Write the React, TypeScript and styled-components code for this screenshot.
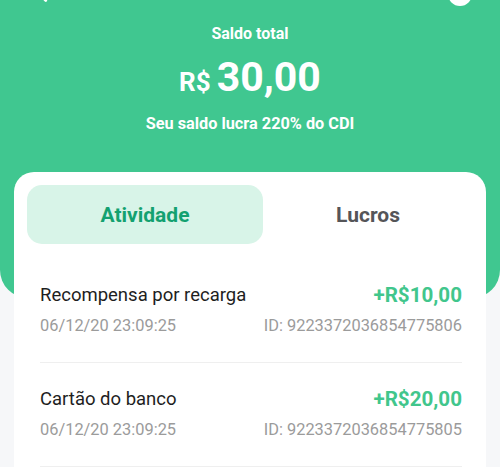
import * as React from 'react';
import styled, { createGlobalStyle } from 'styled-components';

const GlobalStyle = createGlobalStyle`
  body {
    margin: 0;
    background: #f6f7f9;
    font-family: Roboto, "Liberation Sans", sans-serif;
  }
`;

const activities = [
  { title: 'Recompensa por recarga', date: '06/12/20 23:09:25', amount: '+R$10,00', id: '9223372036854775806' },
  { title: 'Cartão do banco', date: '06/12/20 23:09:25', amount: '+R$20,00', id: '9223372036854775805' },
];

export default function App() {
  return (
    <Page>
      <GlobalStyle />
      <Header>
        <TopBar>
          <svg width="22" height="22" viewBox="0 0 24 24" fill="none" stroke="#fff" strokeWidth="3" strokeLinecap="round" strokeLinejoin="round">
            <path d="M15 5 L8 12 L15 19" />
          </svg>
          <HelpDot />
        </TopBar>
        <Label>Saldo total</Label>
        <Balance>
          <Currency>R$</Currency>
          <Value>30,00</Value>
        </Balance>
        <Note>Seu saldo lucra 220% do CDI</Note>
      </Header>
      <Card>
        <Tabs>
          <Tab active>Atividade</Tab>
          <Tab>Lucros</Tab>
        </Tabs>
        <List>
          {activities.map((a) => (
            <Row key={a.id}>
              <Line>
                <Title>{a.title}</Title>
                <Amount>{a.amount}</Amount>
              </Line>
              <Line>
                <Meta>{a.date}</Meta>
                <Meta>ID: {a.id}</Meta>
              </Line>
            </Row>
          ))}
        </List>
      </Card>
    </Page>
  );
}

const Page = styled.div`
  height: 467px;
  background: #f6f7f9;
  overflow: hidden;
`;

const Header = styled.div`
  background: #40c790;
  height: 298px;
  border-radius: 0 0 28px 28px;
  display: flex;
  flex-direction: column;
  align-items: center;
  color: #fff;
`;

const TopBar = styled.div`
  align-self: stretch;
  display: flex;
  justify-content: space-between;
  align-items: center;
  height: 24px;
  margin-top: -18px;
  padding: 0 28px 0 32px;
`;

const HelpDot = styled.div`
  width: 24px;
  height: 24px;
  border-radius: 50%;
  background: #fff;
`;

const Label = styled.div`
  margin-top: 18px;
  font-size: 16px;
  font-weight: 700;
  line-height: 20px;
`;

const Balance = styled.div`
  display: flex;
  align-items: baseline;
  gap: 6px;
  margin-top: 7px;
  line-height: 52px;
`;

const Currency = styled.span`
  font-size: 26px;
  font-weight: 700;
`;

const Value = styled.span`
  font-size: 41px;
  font-weight: 700;
`;

const Note = styled.div`
  margin-top: 6px;
  font-size: 16.3px;
  font-weight: 700;
  line-height: 20px;
`;

const Card = styled.div`
  margin: -126px 14px 0;
  background: #fff;
  border-radius: 20px 20px 0 0;
  padding: 13px 13px 0;
  min-height: 320px;
`;

const Tabs = styled.div`
  display: flex;
`;

const Tab = styled.div<{ active?: boolean }>`
  flex: ${(p) => (p.active ? '0 0 236px' : '1')};
  height: 59px;
  border-radius: 15px;
  display: flex;
  align-items: center;
  justify-content: center;
  font-size: 21px;
  font-weight: 700;
  background: ${(p) => (p.active ? '#d8f4e8' : 'transparent')};
  color: ${(p) => (p.active ? '#13a170' : '#555558')};
`;

const List = styled.div`
  margin-top: 15px;
  padding: 0 11px 0 13px;
`;

const Row = styled.div`
  padding: 25px 0 26px;
  border-bottom: 1px solid #efefef;
  display: flex;
  flex-direction: column;
  gap: 10px;
`;

const Line = styled.div`
  display: flex;
  justify-content: space-between;
  align-items: center;
`;

const Title = styled.div`
  font-size: 18.5px;
  line-height: 22px;
  color: #1e1e1e;
`;

const Amount = styled.div`
  font-size: 20.6px;
  font-weight: 700;
  line-height: 22px;
  color: #41c68c;
`;

const Meta = styled.div`
  font-size: 16.4px;
  line-height: 20px;
  color: #9b9b9b;
`;
